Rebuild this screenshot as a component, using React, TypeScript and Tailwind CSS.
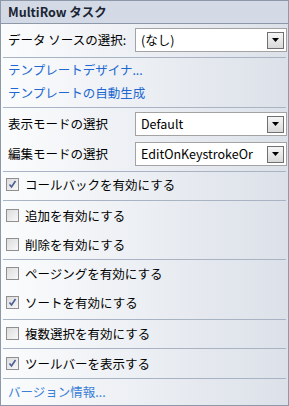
import React from "react";

const font = { fontFamily: '"Noto Sans CJK JP", "Noto Sans", sans-serif' };

function Combo({ value }: { value: string }) {
  return (
    <div className="flex h-[24px] w-[152px] items-center border border-[#a3a3a3] bg-white pl-[5px] pr-[2px]">
      <span className="flex-1 whitespace-nowrap text-[12.5px] leading-[16px] text-black">{value}</span>
      <div className="flex h-[17px] w-[17px] shrink-0 items-center justify-center border border-[#707070] bg-gradient-to-b from-[#f6f6f6] to-[#d9d9d9]">
        <svg width="8" height="5" viewBox="0 0 8 5">
          <path d="M0 0 H7 L3.5 4 Z" fill="#000" />
        </svg>
      </div>
    </div>
  );
}

function Check({ checked, label, mt }: { checked?: boolean; label: string; mt?: string }) {
  return (
    <div className={`flex h-[13px] items-center ${mt ?? ""}`}>
      <div className="ml-[5px] flex h-[13px] w-[13px] shrink-0 items-center justify-center border border-[#8f8f8f] bg-gradient-to-br from-[#dcdcdc] to-[#f8f8f8]">
        {checked && (
          <svg width="9" height="9" viewBox="0 0 9 9">
            <path d="M1.5 4.5 L3.5 7 L7.5 1" stroke="#4a5d95" strokeWidth="1.6" fill="none" />
          </svg>
        )}
      </div>
      <span className="ml-[6px] whitespace-nowrap text-[12.5px] leading-[13px] text-black">{label}</span>
    </div>
  );
}

function Sep() {
  return <div className="ml-[2px] mr-[2px] h-px shrink-0 bg-[#a8b3c3]" />;
}

export default function App() {
  return (
    <div style={font} className="flex h-[406px] w-[289px] flex-col border border-[#8d99a9] bg-gradient-to-r from-[#fbfcfd] to-[#dce1e9]">
      <div className="flex h-[23px] shrink-0 items-center border-b border-[#8d99a9] bg-[#d3dae5] pl-[7px] text-[12.5px] font-bold text-[#1b2533]">
        MultiRow タスク
      </div>
      <div className="flex items-center pt-[4px] pb-[5px] pl-[7px] pr-[1px]">
        <span className="flex-1 whitespace-nowrap text-[12.5px] text-black">データ ソースの選択:</span>
        <Combo value="(なし)" />
      </div>
      <Sep />
      <div className="pt-[1px] pb-[2px] pl-[7px] text-[12.5px] text-[#2068d0]">
        <div className="flex h-[23px] items-center">テンプレートデザイナ...</div>
        <div className="flex h-[23px] items-center">テンプレートの自動生成</div>
      </div>
      <Sep />
      <div className="flex flex-col gap-[6px] pt-[4px] pb-[5px] pl-[7px] pr-[1px]">
        <div className="flex items-center">
          <span className="flex-1 whitespace-nowrap text-[12.5px] text-black">表示モードの選択</span>
          <Combo value="Default" />
        </div>
        <div className="flex items-center">
          <span className="flex-1 whitespace-nowrap text-[12.5px] text-black">編集モードの選択</span>
          <Combo value="EditOnKeystrokeOr" />
        </div>
      </div>
      <Sep />
      <div className="pt-[6px] pb-[9px]">
        <Check checked label="コールバックを有効にする" />
      </div>
      <Sep />
      <div className="pt-[8px] pb-[8px]">
        <Check label="追加を有効にする" />
        <Check label="削除を有効にする" mt="mt-[16px]" />
      </div>
      <Sep />
      <div className="pt-[7px] pb-[10px]">
        <Check label="ページングを有効にする" />
        <Check checked label="ソートを有効にする" mt="mt-[16px]" />
      </div>
      <Sep />
      <div className="pt-[7px] pb-[8px]">
        <Check label="複数選択を有効にする" />
      </div>
      <Sep />
      <div className="pt-[8px] pb-[8px]">
        <Check checked label="ツールバーを表示する" />
      </div>
      <Sep />
      <div className="flex h-[26px] items-center pl-[7px] text-[12.5px] text-[#3a7fd6]">バージョン情報...</div>
    </div>
  );
}
